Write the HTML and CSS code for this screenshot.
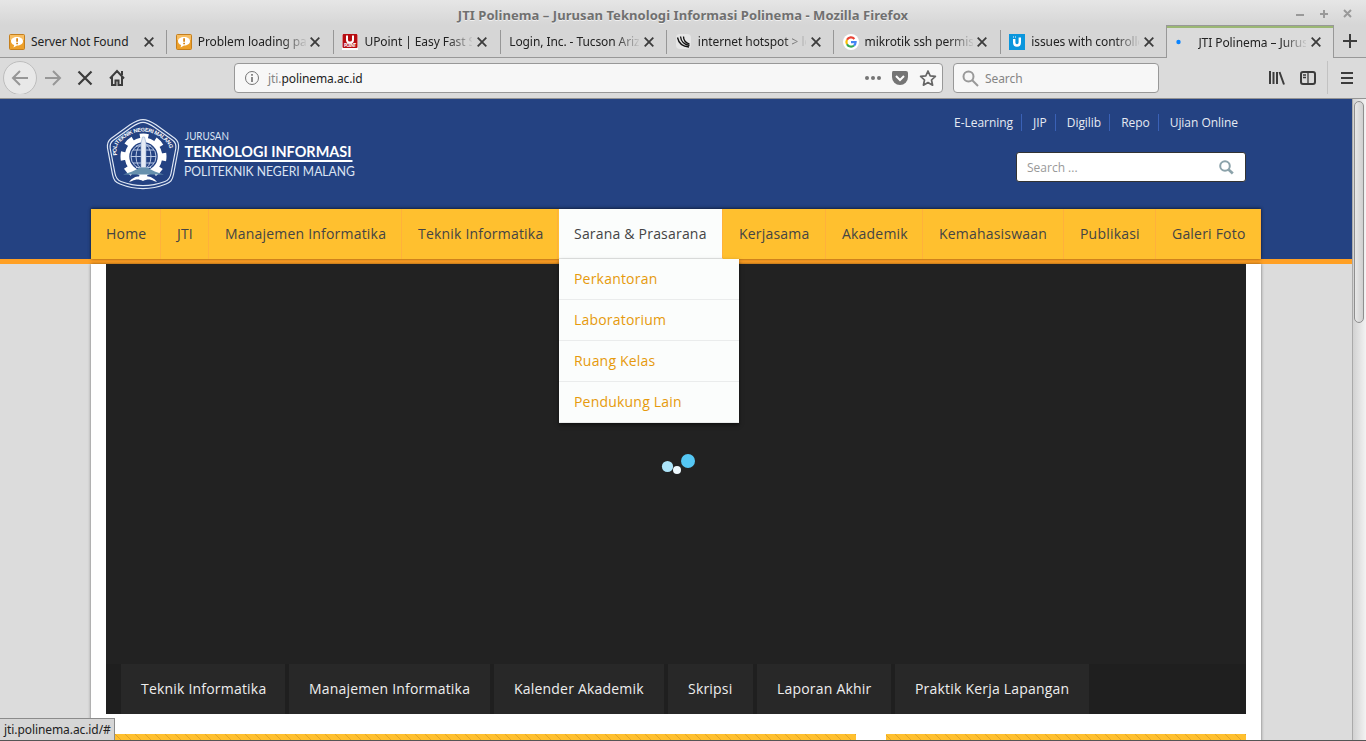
FILE: index.html
```html
<!DOCTYPE html>
<html lang="id">
<head>
<meta charset="utf-8">
<title>JTI Polinema – Jurusan Teknologi Informasi Polinema</title>
<link rel="stylesheet" href="styles.css">
</head>
<body>
<svg width="0" height="0" class="defs">
  <symbol id="x" viewBox="0 0 10 10"><path d="M.7.7l8.6 8.6M9.3.7L.7 9.3" stroke="#3c3c3c" stroke-width="1.8" fill="none"/></symbol>
  <symbol id="warn" viewBox="0 0 16 16"><rect x=".5" y=".5" width="15" height="15" rx="1" fill="#eda02a" stroke="#c57f1d"/><path d="M1 1h14v5H1z" fill="#f8be62"/><path d="M8 3c3.600 0 6 1.700 6 4.200S11.600 11.500 8 11.500l-3.500 2 .7-2.500C3.300 10.300 2 9 2 7.200 2 4.700 4.400 3 8 3z" fill="#fff"/><path d="M7.200 4.300h1.800v3.500H7.200zM7.200 8.700h1.800v1.600H7.200z" fill="#d8861a"/></symbol>
</svg>
<div class="window">
  <header class="titlebar">
    <span class="title">JTI Polinema – Jurusan Teknologi Informasi Polinema - Mozilla Firefox</span>
    <svg class="controls" width="60" height="14" fill="none" stroke="#999" stroke-width="2"><path d="M1 9h8M25 8h8M29 4v8M49 4l7 7M56 4l-7 7"/></svg>
  </header>
  <div class="tabs">
    <div class="tab first"><svg class="fav"><use href="#warn"/></svg><span class="label">Server Not Found</span><svg class="close"><use href="#x"/></svg></div>
    <div class="tab"><svg class="fav"><use href="#warn"/></svg><span class="label">Problem loading page</span><svg class="close"><use href="#x"/></svg></div>
    <div class="tab"><svg class="fav" viewBox="0 0 16 16"><path fill="#fff" d="M0 0h16v16H0z"/><rect x=".5" width="15" height="14" rx="1" fill="#b70d12"/><path d="M5 1.500v4.500q0 2.500 3 2.500t3-2.500V1.500" fill="none" stroke="#fff" stroke-width="2"/><text x="2" y="13" font-size="4.500" font-weight="bold" fill="#fff" textLength="12">POINT</text></svg><span class="label">UPoint | Easy Fast Se</span><svg class="close"><use href="#x"/></svg></div>
    <div class="tab"><span class="label wide">Login, Inc. - Tucson Arizo</span><svg class="close"><use href="#x"/></svg></div>
    <div class="tab"><svg class="fav" viewBox="0 0 16 16"><rect width="15" height="15" rx="4" fill="#e6e6e6"/><g fill="none" stroke="#111" stroke-width="1.300"><path d="M1.500 3.500c1 5 5 9 11.500 9.500M4.500 2.500c.5 5 3.500 8 9 9M7.500 2.500c0 4 2.500 6.500 6 7.500"/></g></svg><span class="label">internet hotspot &gt; log</span><svg class="close"><use href="#x"/></svg></div>
    <div class="tab"><svg class="fav" viewBox="0 0 16 16"><circle cx="8" cy="8" r="8" fill="#fff"/><g fill="none" stroke-width="2.200"><path d="M11.400 4.900A4.600 4.600 0 0 0 4 5.800" stroke="#ea4335"/><path d="M4 5.800a4.600 4.600 0 0 0 0 4.400" stroke="#fbbc05"/><path d="M4 10.200a4.600 4.600 0 0 0 7 1.300" stroke="#34a853"/><path d="M11 11.500A4.600 4.600 0 0 0 12.600 8.200H8" stroke="#4285f4"/></g></svg><span class="label">mikrotik ssh permiss</span><svg class="close"><use href="#x"/></svg></div>
    <div class="tab"><svg class="fav" viewBox="0 0 16 16"><path fill="#0a96dd" d="M0 0h16v16H0z"/><path d="M5.200 5v3.500q0 3 2.800 3t2.800-3V3.500" fill="none" stroke="#fff" stroke-width="2.400"/><path d="M6 2.500h1v1H6zM4 2.500h1v1H4z" fill="#fff"/></svg><span class="label">issues with controlle</span><svg class="close"><use href="#x"/></svg></div>
    <div class="tab active"><svg class="fav" viewBox="0 0 16 16"><circle cx="2.500" cy="8" r="2.200" fill="#0a84ff"/></svg><span class="label">JTI Polinema – Jurusa</span><svg class="close"><use href="#x"/></svg></div>
    <div class="newtab"><svg width="14" height="14"><path d="M7 0v14M0 7h14" stroke="#3c3c3c" stroke-width="2"/></svg></div>
  </div>
  <div class="toolbar">
    <svg class="navicons" width="130" height="36" fill="none">
      <circle cx="20" cy="20" r="16.500" fill="#e8e8e8" stroke="#bdbdbd"/>
      <g stroke="#979797" stroke-width="2"><path d="M28 20H13M20 13l-7 7 7 7"/><path d="M45 20h15M53 13l7 7-7 7"/></g>
      <path d="M78.500 13.500l13 13M91.500 13.500l-13 13" stroke="#3c3c3c" stroke-width="2.200"/>
      <path d="M110 20.500l7-7.500 7 7.500M112 19v8h3.500v-4.500h3V27h3.500v-8" stroke="#3c3c3c" stroke-width="2"/><path d="M121 13h2v4h-2z" fill="#3c3c3c"/>
    </svg>
    <div class="urlbar">
      <svg width="16" height="16" fill="none" stroke="#757575"><circle cx="8" cy="8" r="6.500"/><path d="M8 7v5M8 4v1.800" stroke-width="1.700"/></svg>
      <span class="url"><i>jti.</i>polinema.ac.id</span>
      <svg class="page-actions" width="76" height="20"><g fill="#757575"><circle cx="4" cy="10" r="2"/><circle cx="10" cy="10" r="2"/><circle cx="16" cy="10" r="2"/><path d="M30 3h13q2 0 2 2v4a8 8 0 0 1-16 0V5q0-2 1-2z"/></g><path d="M33 8l4 4 4-4" fill="none" stroke="#fff" stroke-width="2"/><path d="M65 3l2.200 4.800 5.200.6-3.900 3.600 1.100 5.200-4.600-2.600-4.600 2.600 1.100-5.200-3.900-3.600 5.200-.6z" fill="none" stroke="#666" stroke-width="1.700" stroke-linejoin="round"/></svg>
    </div>
    <div class="search-box"><svg width="17" height="17" fill="none" stroke="#999" stroke-width="2"><circle cx="6.500" cy="6.500" r="5"/><path d="M10 10l6 6"/></svg><span>Search</span></div>
    <svg class="tools" width="98" height="36" fill="none" stroke="#3c3c3c" stroke-width="2"><path d="M2 13v13M5.500 14v12M9 14v12M11.500 14l4.500 12.500"/><rect x="33" y="14" width="14" height="12" rx="2"/><path d="M40 14v12M35 17h3M35 19.500h3" stroke-width="1.300"/><path d="M59.500 3v33" stroke="#c2c2c2" stroke-width="1"/><path d="M73 15h12M73 20h12M73 25h12"/></svg>
  </div>
  <div class="viewport">
    <div class="page">
      <div class="masthead">
        <div class="wrap brand-row">
          <svg class="logo" width="260" height="80" viewBox="0 0 260 80">
            <g fill="none" stroke="#dfe7f4" stroke-width="1.200"><path d="M39 2.600c4 0 8 2 13 5.200L71 21.500c3.500 2.700 4 5 3.500 9.500l-5 26.500c-1.200 6-3 8-7.500 9.500-15 6-31 6-46 0-4.500-1.500-6.300-3.500-7.500-9.500L3.500 31c-.5-4.500 0-6.800 3.500-9.500L26 7.800c5-3.200 9-5.200 13-5.200z"/><path d="M39 5.400c3 0 7 1.800 11.500 4.800L69 23.500c3 2.300 3.300 4.200 2.800 8L67 56.500c-1 5-2.500 6.700-6 8-14.500 5.500-29.500 5.500-44 0-3.500-1.300-5-3-6-8l-4.800-25c-.5-3.800-.2-5.700 2.800-8l18.500-13.300C32 7.200 36 5.400 39 5.400z"/></g>
            <path id="arc" d="M13 38.500C12 30 13 27 17 24Q28 14.500 39 14.500T61 24c4 3 5 6 4 14.500" fill="none"/>
            <text class="seal-text"><textPath href="#arc" textLength="74">POLITEKNIK NEGERI MALANG</textPath></text>
            <circle cx="39.500" cy="39.500" r="20.500" fill="none" stroke="#fff" stroke-width="5" stroke-dasharray="8.600 7.500" stroke-dashoffset="4.300"/>
            <circle cx="39.500" cy="39.500" r="16.500" fill="#244282" stroke="#fff" stroke-width="4.500"/>
            <g fill="none" stroke="#b9c8e4" stroke-width="1"><circle cx="39.500" cy="39.500" r="12.500"/><ellipse cx="39.500" cy="39.500" rx="7.500" ry="12.500"/><path d="M27 39.500h25M29 33h21M29 46h21M32 29h15M32 50.500h15"/></g>
            <path d="M37 51V26l1.500-6h2l1.500 6v25z" fill="#e5ebf5" stroke="#8fa7cf" stroke-width=".6"/>
            <path d="M19 57.500c7-2 12-4 17-7h7c5 3 10 5 17 7z" fill="#6791ad"/>
            <path d="M25 65c5-6 9-6 14-5 5-1 9-1 14 5l-3-1c-4-2-7-2-11 0-4-2-7-2-11 0z" fill="#fff"/>
            <g class="logo-text"><text x="81" y="23" font-size="11" textLength="44" lengthAdjust="spacingAndGlyphs">JURUSAN</text><text x="80.500" y="40" font-size="15" font-weight="bold" textLength="167" lengthAdjust="spacingAndGlyphs">TEKNOLOGI INFORMASI</text><text x="80" y="58.500" font-size="13.500" textLength="171" lengthAdjust="spacingAndGlyphs">POLITEKNIK NEGERI MALANG</text></g>
            <path d="M80.500 43h168v2h-168z" fill="#fff"/>
          </svg>
          <div class="utility">
            <nav class="quick"><a>E-Learning</a><a>JIP</a><a>Digilib</a><a>Repo</a><a>Ujian Online</a></nav>
            <div class="site-search"><span>Search ...</span><svg width="15" height="15" fill="none" stroke="#8ba2aa"><circle cx="6" cy="6" r="4.800" stroke-width="2"/><path d="M9.500 9.500l4.300 4" stroke-width="2.700"/></svg></div>
          </div>
        </div>
        <nav class="wrap menu">
          <a class="m1">Home</a><a class="m2">JTI</a><a class="m3">Manajemen Informatika</a><a class="m4">Teknik Informatika</a>
          <div class="m5 open"><a>Sarana &amp; Prasarana</a>
            <ul class="dropdown"><li>Perkantoran</li><li>Laboratorium</li><li>Ruang Kelas</li><li>Pendukung Lain</li></ul>
          </div>
          <a class="m6">Kerjasama</a><a class="m7">Akademik</a><a class="m8">Kemahasiswaan</a><a class="m9">Publikasi</a><a class="m10">Galeri Foto</a>
        </nav>
      </div>
      <main class="wrap content">
        <section class="slider">
          <div class="stage"><svg width="36" height="24"><circle cx="6.500" cy="14.500" r="5.600" fill="#ade5fa"/><circle cx="16" cy="18" r="4" fill="#eef9fe"/><circle cx="27" cy="9" r="7" fill="#55c7f4"/></svg></div>
          <nav class="slide-tabs"><a class="s1">Teknik Informatika</a><a class="s2">Manajemen Informatika</a><a class="s3">Kalender Akademik</a><a class="s4">Skripsi</a><a class="s5">Laporan Akhir</a><a class="s6">Praktik Kerja Lapangan</a></nav>
        </section>
        <div class="columns"><div class="stripe"></div><div class="stripe"></div></div>
      </main>
    </div>
    <div class="scrollbar"><div class="thumb"></div></div>
    <div class="status">jti.polinema.ac.id/#</div>
  </div>
</div>
</body>
</html>
```
FILE: styles.css
```css
* { box-sizing: border-box; }
body { margin: 0; font-family: "Noto Sans", sans-serif; font-size: 12px; letter-spacing: -.08px; color: #222; }
.defs { position: absolute; }
.window { height: 741px; overflow: hidden; display: flex; flex-direction: column; background: #dbdbdb; }

/* Browser chrome */
.titlebar { height: 25px; display: flex; justify-content: center; align-items: center; position: relative; background: linear-gradient(#e6e6e6, #d6d6d6); padding-top: 4px; }
.title { font-weight: 700; font-size: 13px; letter-spacing: .06px; color: #707070; text-shadow: 0 1px #f0f0f0; white-space: nowrap; }
.controls { position: absolute; right: 11px; top: 6px; }
.tabs { height: 33px; display: flex; background: #d6d6d6; border-bottom: 1px solid #989898; }
.tab { width: 166.7px; flex: none; height: 33px; padding: 0 12.500px 0 9.500px; display: flex; align-items: center; position: relative; }
.tab.first { width: 166.3px; padding: 0 12px 0 9px; }
.tab:not(.first):not(.active)::before { content: ""; position: absolute; left: 0; top: 5px; width: 1px; height: 24px; background: #979797; }
.fav { width: 16px; height: 16px; margin-right: 6px; flex: none; }
.label { width: 108px; flex: none; overflow: hidden; white-space: nowrap; mask-image: linear-gradient(90deg, #000 84px, transparent 110px); }
.first .label { mask-image: none; }
.label.wide { width: 130px; mask-image: linear-gradient(90deg, #000 106px, transparent 132px); }
.close { width: 10px; height: 10px; margin-left: auto; flex: none; }
.tab.active { width: 168px; padding: 0 12px 0 9px; background: #dbdbdb; border: 1px solid #989898; border-bottom: 0; box-shadow: inset 0 2px #9bb774; }
.newtab { flex: 1; padding: 9px 0 0 9px; }
.toolbar { height: 41px; display: flex; align-items: flex-start; border-bottom: 1px solid #949494; }
.urlbar, .search-box { height: 30px; margin-top: 5px; border: 1px solid #989898; border-radius: 4px; background: #f7f7f7; display: flex; align-items: center; }
.urlbar { width: 709px; margin-left: 104px; padding: 0 3px 0 9px; gap: 8px; }
.url i { color: #858585; font-style: normal; }
.page-actions { margin-left: auto; }
.search-box { width: 206px; margin-left: 10px; padding-left: 8px; gap: 6px; color: #858585; }
.tools { margin-left: auto; }

/* Page */
.viewport { flex: 1; display: flex; min-height: 0; position: relative; border-bottom: 1px solid #555; }
.page { width: 1352px; overflow: hidden; background: #dcdcdc; }
.wrap { width: 1170px; margin: 0 auto; }
.masthead { height: 165px; background: #244282; border-bottom: 5px solid #ffa024; }
.brand-row { height: 110px; display: flex; justify-content: space-between; padding: 18px 15px 0 13px; }
.utility { display: flex; flex-direction: column; align-items: flex-end; margin-top: -18px; }
.quick { display: flex; margin-top: 15px; color: #e6eaf2; font-family: "Open Sans", sans-serif; letter-spacing: -.04px; }
.quick a { height: 17px; line-height: 17px; padding: 0 8px 0 11px; border-right: 1px solid #3a61b6; white-space: nowrap; }
.quick a:last-child { border: 0; }
.site-search { width: 230px; height: 30px; margin-top: 21px; border: 1px solid #333; border-radius: 3px; background: #fff; display: flex; align-items: center; justify-content: space-between; padding: 0 11px 0 10px; color: #999; font-family: "Open Sans", sans-serif; letter-spacing: 0; }
.logo-text { fill: #fff; font-family: Lato, sans-serif; letter-spacing: 0; }
.logo-text text:not([font-weight]) { fill: #dce4f2; }
.seal-text { font: bold 5.500px "Liberation Sans", sans-serif; letter-spacing: 0; fill: #fff; }
.menu { height: 50px; display: flex; position: relative; z-index: 2; background: #ffc02f; font: 14px/50px "Open Sans", sans-serif; letter-spacing: .2px; color: #444; box-shadow: 0 0 3px rgba(0,0,0,.35), 0 -1px 3px rgba(0,0,0,.35); }
.menu > * { flex: none; padding-left: 15px; border-right: 1px solid #ffb13b; white-space: nowrap; }
.m1 { width: 70px; } .m2 { width: 48px; } .m3 { width: 193px; } .m4 { width: 156px; }
.m6 { width: 103px; } .m7 { width: 97px; } .m8 { width: 141px; } .m9 { width: 92px; } .m10 { width: 105px; }
.m2, .m3, .m4, .m6, .m7, .m8, .m9, .m10 { text-indent: 1px; }
.menu .open { position: relative; background: #fbfdfc; border-bottom: 1px solid #e6e8e7; margin-left: 1px; width: 164px; }
.dropdown { position: absolute; left: 0; top: 50px; width: 180px; margin: 0; padding: 0; list-style: none; background: #fbfdfc; color: #e69a0c; line-height: 40px; box-shadow: 0 2px 4px rgba(0,0,0,.5); }
.dropdown li { height: 41px; padding-left: 15px; border-bottom: 1px solid #eaecec; }
.content { background: #fff; padding: 0 15px; height: 480px; box-shadow: 0 0 3px rgba(0,0,0,.5); }
.slider { height: 450px; background: #222; display: flex; flex-direction: column; }
.stage { height: 400px; padding: 188px 0 0 555px; }
.slide-tabs { height: 50px; display: flex; gap: 4px; padding-left: 15px; background: #1f1f1f; color: #eee; font: 14px/50px "Open Sans", sans-serif; letter-spacing: .2px; }
.slide-tabs a { background: #282828; padding-left: 20px; white-space: nowrap; }
.s1 { width: 164px; } .s2 { width: 201px; } .s3 { width: 170px; } .s4 { width: 85px; } .s5 { width: 134px; } .s6 { width: 194px; }
.columns { display: grid; grid-template-columns: 750px 360px; gap: 30px; padding-top: 20px; }
.stripe { height: 10px; background: repeating-linear-gradient(45deg, #ffc02f 0 6.100px, #dfa32e 6.100px 7.070px); }
.scrollbar { width: 14px; border-left: 1px solid #aaa; background: linear-gradient(90deg, #d2d2d2, #f3f3f3); padding: 2px 2px 0 1px; }
.thumb { height: 222px; border: 1px solid #8f8f8f; border-radius: 5px; background: linear-gradient(90deg, #e8e8e8, #cfcfcf); }
.status { position: absolute; left: 0; bottom: 0; z-index: 3; width: 115px; height: 22px; padding: 2px 0 0 4px; background: #d6d6d6; border: solid #8b8b8b; border-width: 1px 1px 0 0; white-space: nowrap; }
```
